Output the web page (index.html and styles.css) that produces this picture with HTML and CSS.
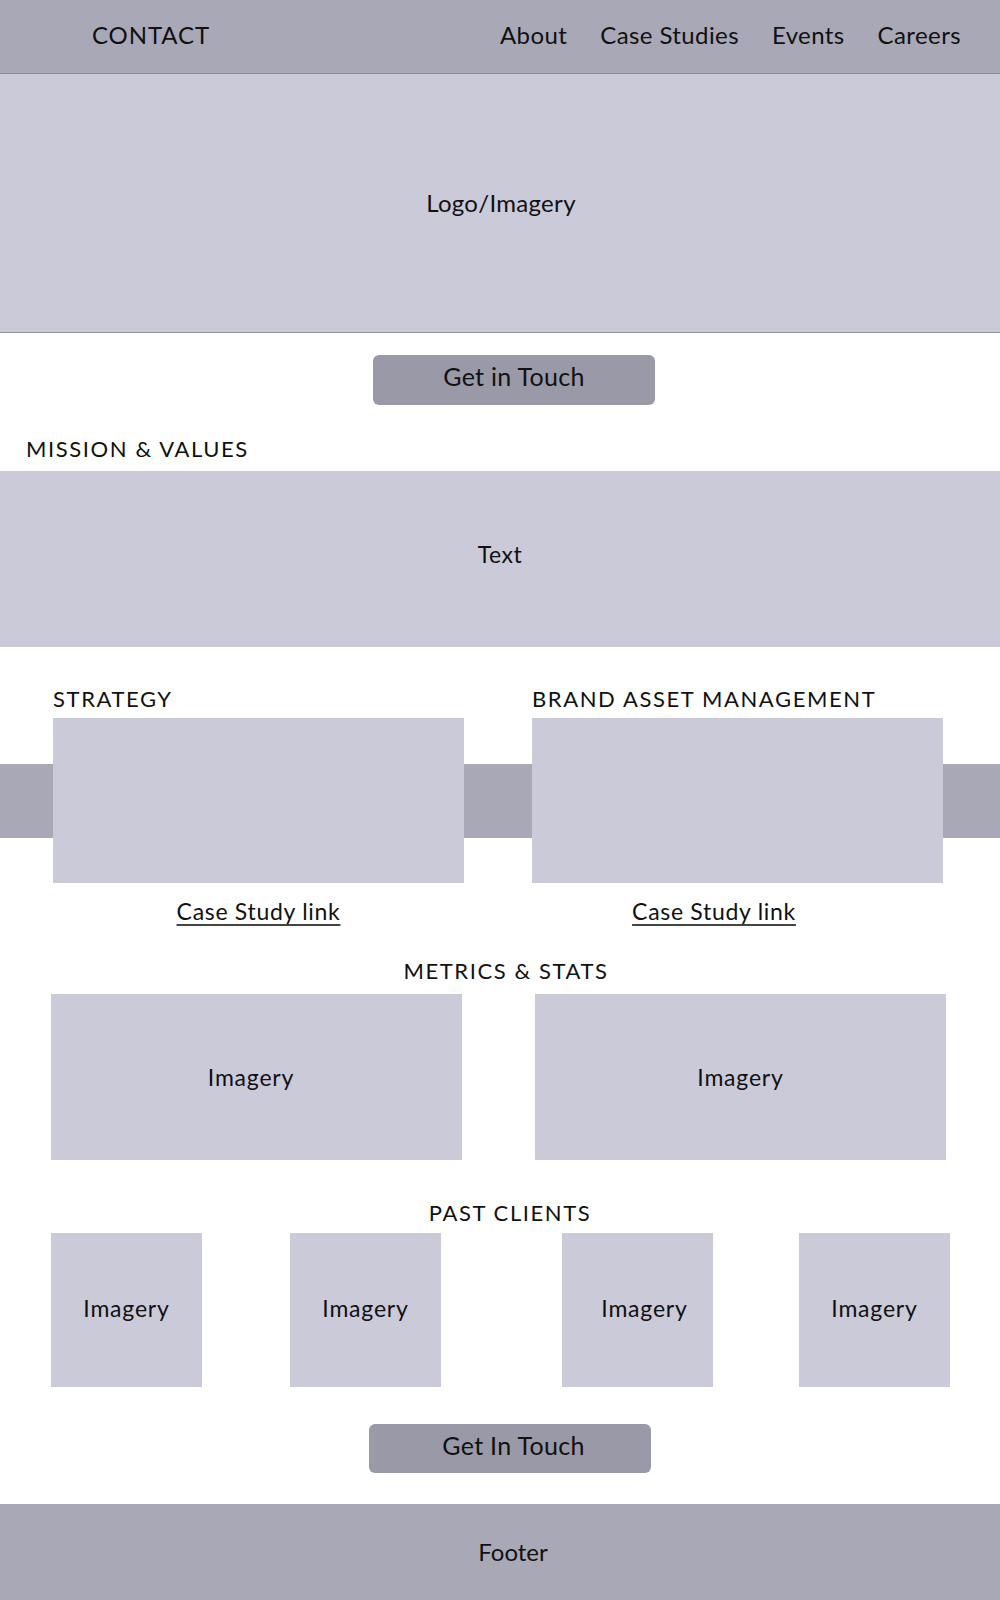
FILE: index.html
```html
<!DOCTYPE html>
<html lang="en">
<head>
    <meta charset="UTF-8">
    <meta name="viewport" content="width=device-width, initial-scale=1.0">
    <title>Contact - Wireframe</title>
    <link rel="stylesheet" href="styles.css">
</head>
<body>
    <header class="topbar">
        <div class="brand">CONTACT</div>
        <nav class="nav">
            <a href="#">About</a>
            <a href="#">Case Studies</a>
            <a href="#">Events</a>
            <a href="#">Careers</a>
        </nav>
    </header>

    <section class="hero">Logo/Imagery</section>

    <div class="cta cta-top">
        <a class="btn" href="#">Get in Touch</a>
    </div>

    <h2 class="label mission-label">MISSION &amp; VALUES</h2>
    <section class="mission">Text</section>

    <section class="services">
        <div class="service">
            <h2 class="label">STRATEGY</h2>
            <div class="service-box"></div>
            <div class="service-link"><a href="#">Case Study link</a></div>
        </div>
        <div class="service service-right">
            <h2 class="label">BRAND ASSET MANAGEMENT</h2>
            <div class="service-box"></div>
            <div class="service-link"><a href="#">Case Study link</a></div>
        </div>
    </section>

    <h2 class="label section-title metrics-title">METRICS &amp; STATS</h2>
    <section class="metrics">
        <div class="tile metric metric-1">Imagery</div>
        <div class="tile metric">Imagery</div>
    </section>

    <h2 class="label section-title clients-title">PAST CLIENTS</h2>
    <section class="clients">
        <div class="tile client">Imagery</div>
        <div class="tile client client-2">Imagery</div>
        <div class="tile client client-3">Imagery</div>
        <div class="tile client client-4">Imagery</div>
    </section>

    <div class="cta cta-bottom">
        <a class="btn" href="#">Get In Touch</a>
    </div>

    <footer class="footer">Footer</footer>
</body>
</html>
```

FILE: styles.css
```css
body {
    margin: 0;
    font-family: Lato, "Open Sans", Arial, sans-serif;
    color: #111;
    background-color: #fff;
}
a {
    color: inherit;
    text-decoration: none;
}

/* top bar */
.topbar {
    display: flex;
    justify-content: space-between;
    align-items: flex-start;
    height: 50px;
    padding: 23px 39px 0 92px;
    background-color: #a9a8b6;
    border-bottom: 1px solid #8d8c99;
    font-size: 24px;
    line-height: 24px;
}
.brand {
    letter-spacing: 0.9px;
}
.nav {
    display: flex;
    gap: 33px;
    letter-spacing: 0.4px;
}

/* hero */
.hero {
    display: flex;
    align-items: center;
    justify-content: center;
    height: 258px;
    padding-left: 2px;
    background-color: #cbcad9;
    border-bottom: 1px solid #8d8c99;
    font-size: 24px;
    line-height: 24px;
    letter-spacing: 0.3px;
}

/* buttons */
.cta {
    display: flex;
    justify-content: center;
}
.cta-top {
    padding: 22px 0 0 28px;
}
.cta-bottom {
    padding: 37px 0 0 20px;
}
.btn {
    display: block;
    box-sizing: border-box;
    width: 282px;
    height: 50px;
    padding-top: 9px;
    border-radius: 6px;
    background-color: #9a99a8;
    text-align: center;
    font-size: 25px;
    line-height: 25px;
    letter-spacing: 0.3px;
}
.cta-bottom .btn {
    height: 49px;
    padding-left: 7px;
}

/* labels */
.label {
    margin: 0;
    font-size: 22px;
    line-height: 22px;
    font-weight: normal;
    letter-spacing: 1.6px;
}
.mission-label {
    margin: 33px 0 0 26px;
}
.mission {
    display: flex;
    align-items: center;
    justify-content: center;
    height: 166px;
    margin-top: 11px;
    padding-bottom: 10px;
    background-color: #cbcad9;
    font-size: 23px;
    line-height: 23px;
    letter-spacing: 0.5px;
}

/* services with the stripe behind the boxes */
.services {
    display: flex;
    gap: 68px;
    margin-top: 41px;
    padding-left: 53px;
    background: linear-gradient(to bottom,
        transparent 76px, #a9a8b6 76px,
        #a9a8b6 150px, transparent 150px);
}
.service {
    width: 411px;
}
.service-box {
    height: 165px;
    margin-top: 8px;
    background-color: #cbcad9;
}
.service-link {
    margin-top: 17px;
    text-align: center;
    font-size: 23px;
    line-height: 22px;
    letter-spacing: 0.7px;
}
.service-right .service-link {
    padding-right: 47px;
}
.service-link a {
    text-decoration: underline;
    text-decoration-thickness: 2px;
    text-underline-offset: 4px;
    text-decoration-color: #444;
}

/* metrics / clients */
.section-title {
    text-align: center;
}
.metrics-title {
    margin-top: 38px;
    padding-left: 12px;
}
.clients-title {
    margin-top: 42px;
    padding-left: 20px;
}
.tile {
    display: flex;
    align-items: center;
    justify-content: center;
    box-sizing: border-box;
    background-color: #cbcad9;
    font-size: 23px;
    line-height: 23px;
    letter-spacing: 0.8px;
}
.metrics {
    display: flex;
    gap: 73px;
    margin-top: 12px;
    padding-left: 51px;
}
.metric {
    width: 411px;
    height: 166px;
}
.metric-1 {
    padding-right: 11px;
}
.clients {
    display: flex;
    margin-top: 9px;
    padding-left: 51px;
}
.client {
    width: 151px;
    height: 154px;
    padding-bottom: 4px;
}
.client-2 {
    margin-left: 88px;
}
.client-3 {
    margin-left: 121px;
    padding-left: 14px;
}
.client-4 {
    margin-left: 86px;
}

/* footer */
.footer {
    display: flex;
    align-items: center;
    justify-content: center;
    height: 96px;
    margin-top: 31px;
    padding-left: 26px;
    box-sizing: border-box;
    background-color: #a9a8b6;
    font-size: 24px;
    line-height: 24px;
}
```
